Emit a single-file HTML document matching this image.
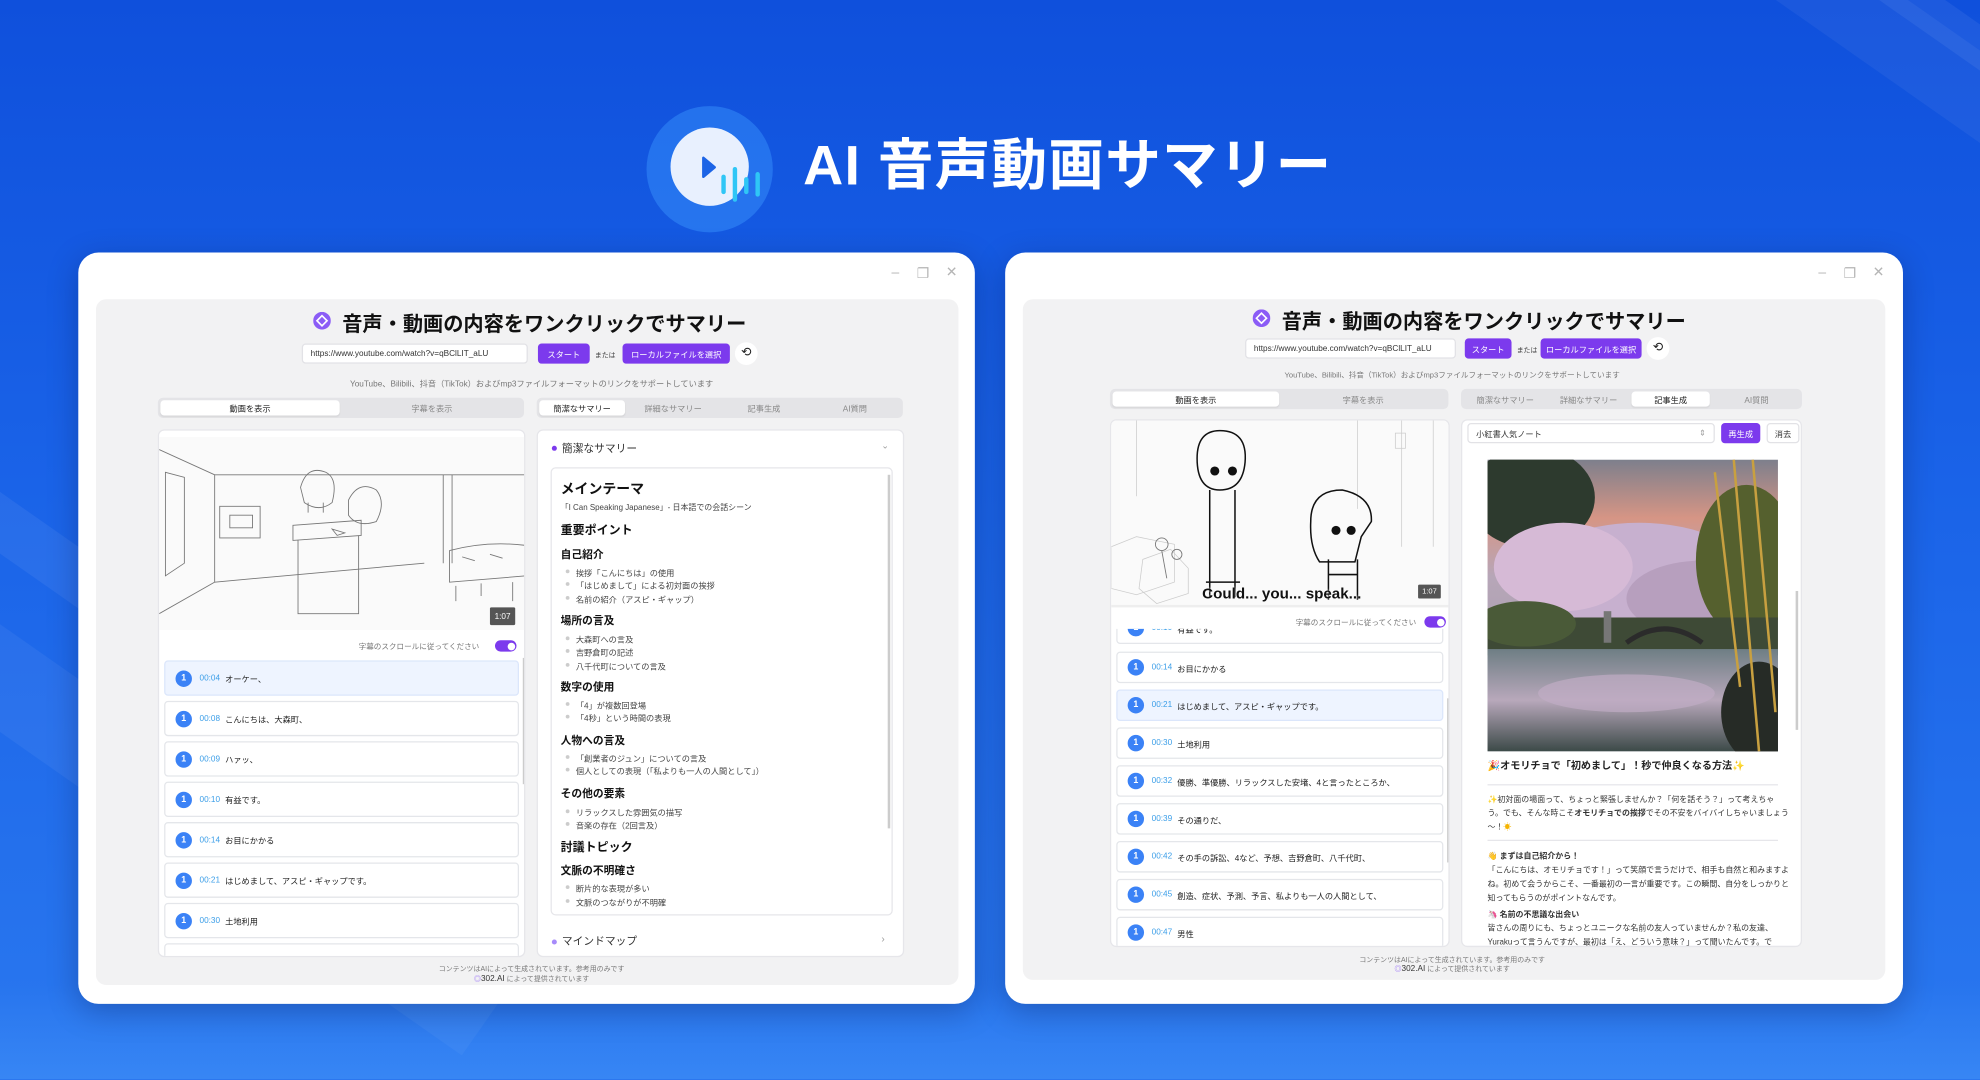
<!DOCTYPE html>
<html><head><meta charset="utf-8">
<style>
*{margin:0;padding:0;box-sizing:border-box}
html,body{width:1980px;height:1080px;overflow:hidden}
body{background:#1b5fe4;font-family:"Liberation Sans","Noto Sans CJK JP",sans-serif}
#w{position:absolute;left:0;top:0;width:1568px;height:855px;transform:scale(1.26276);transform-origin:0 0;overflow:hidden;
background:linear-gradient(180deg,#0f50dc 0%,#1a63e8 45%,#2a78ef 100%)}
.a{position:absolute}
.streak{position:absolute;background:rgba(255,255,255,0.06);transform:rotate(35deg)}
.win{position:absolute;background:#fff;border-radius:16px;box-shadow:0 6px 24px rgba(0,0,40,.25)}
.ctl{position:absolute;color:#b5b5b5;font-size:11px}
.inner{position:absolute;background:#f2f2f3;border-radius:8px}
.ttl{position:absolute;font-weight:bold;font-size:16px;color:#111;white-space:nowrap}
.input{position:absolute;background:#fff;border:1px solid #e2e2e6;border-radius:3px;font-size:6.5px;color:#333;padding-left:6px;display:flex;align-items:center}
.btn{position:absolute;background:#7c3aed;color:#fff;font-size:6.5px;border-radius:3px;display:flex;align-items:center;justify-content:center}
.sm{position:absolute;font-size:6.5px;color:#777;white-space:nowrap}
.tabs{position:absolute;background:#e4e4e7;border-radius:4px}
.tab{position:absolute;top:2px;height:12px;font-size:6.5px;color:#888;display:flex;align-items:center;justify-content:center}
.tab.on{background:#fff;color:#222;border-radius:3px;box-shadow:0 1px 1px rgba(0,0,0,.06)}
.card{position:absolute;background:#fff;border:1px solid #e6e6ea;border-radius:5px;overflow:hidden}
.li{position:absolute;left:4px;background:#fff;border:1px solid #e4e6ea;border-radius:3px;font-size:6.5px;color:#222;display:flex;align-items:center;white-space:nowrap}
.li.hl{background:#eef4ff;border-color:#dbe6fb}
.n{width:13px;height:13px;border-radius:50%;background:#3b82f6;color:#fff;font-size:7px;font-weight:bold;display:flex;align-items:center;justify-content:center;margin:0 6px 0 8px}
.tm{color:#3b9ee8;margin-right:4px}
.tog{position:absolute;width:17px;height:9px;border-radius:5px;background:#7c3aed}
.tog:after{content:"";position:absolute;right:1.5px;top:1.5px;width:6px;height:6px;border-radius:50%;background:#fff}
.bd{position:absolute;background:#555;color:#fff;font-size:6.5px;border-radius:1px;display:flex;align-items:center;justify-content:center}
.h1{position:absolute;font-weight:bold;font-size:11px;color:#111;white-space:nowrap}
.h2{position:absolute;font-weight:bold;font-size:9.5px;color:#111;white-space:nowrap}
.h3{position:absolute;font-weight:bold;font-size:8.5px;color:#111;white-space:nowrap}
.bl{position:absolute;font-size:6.5px;color:#444;white-space:nowrap}
.bl:before{content:"";position:absolute;left:-8px;top:3px;width:3px;height:3px;border-radius:50%;background:#ccc}
.p{position:absolute;font-size:6.3px;color:#333;white-space:nowrap}
.foot{position:absolute;font-size:5.5px;color:#777;white-space:nowrap;text-align:center}
</style></head><body>
<div id="w">
<div class="streak" style="left:-120px;top:520px;width:600px;height:40px"></div>
<div class="streak" style="left:-160px;top:600px;width:600px;height:70px;background:rgba(255,255,255,.05)"></div>
<div class="streak" style="left:1200px;top:-60px;width:500px;height:30px"></div>
<div class="streak" style="left:1280px;top:20px;width:500px;height:60px;background:rgba(255,255,255,.05)"></div>
<div class="a" style="left:0;top:780px;width:1568px;height:75px;background:linear-gradient(180deg,rgba(80,150,255,0),rgba(80,160,255,.35))"></div>

<div class="a" style="left:512px;top:84px;width:100px;height:100px;border-radius:50%;background:rgba(60,150,255,.45)"></div>
<div class="a" style="left:531px;top:101px;width:62px;height:62px;border-radius:50%;background:#e8f0fe"></div>
<svg class="a" style="left:520px;top:90px" width="100" height="90">
<path d="M37 35 L37 50 L46 42.5 Z" fill="#1c64e6" stroke="#1c64e6" stroke-width="2" stroke-linejoin="round"/>
<g stroke="#2fc6f6" stroke-width="3.5" stroke-linecap="round"><line x1="53" y1="50" x2="53" y2="62"/><line x1="62" y1="44" x2="62" y2="68"/><line x1="71" y1="52" x2="71" y2="62"/><line x1="80" y1="48" x2="80" y2="64"/></g>
</svg>
<div class="a" style="left:636px;top:104px;font-size:44px;font-weight:bold;color:#fff;white-space:nowrap;letter-spacing:1px;line-height:55px">AI 音声動画サマリー</div>

<!-- LEFT WINDOW -->
<div class="win" style="left:62px;top:200px;width:710px;height:595px">
<div class="ctl" style="left:644px;top:10px">–</div>
<div class="ctl" style="left:664px;top:10px">❐</div>
<div class="ctl" style="left:687px;top:9px">✕</div>
<div class="inner" style="left:14px;top:37px;width:683px;height:543px">
<svg class="a" style="left:172px;top:10px" width="14" height="14"><circle cx="7" cy="7" r="7" fill="#8b5cf6"/><path d="M7 3 L11 7 L7 11 L3 7Z" fill="none" stroke="#fff" stroke-width="1.3"/></svg>
<div class="ttl" style="left:195px;top:6px">音声・動画の内容をワンクリックでサマリー</div>
<div class="input" style="left:163px;top:35px;width:179px;height:16px">https://www.youtube.com/watch?v=qBClLIT_aLU</div>
<div class="btn" style="left:350px;top:35px;width:41px;height:16px">スタート</div>
<div class="sm" style="left:395px;top:40px;color:#444;font-size:5.5px">または</div>
<div class="btn" style="left:417px;top:35px;width:85px;height:16px">ローカルファイルを選択</div>
<div class="a" style="left:506px;top:34px;width:18px;height:18px;border-radius:50%;background:#fff;font-size:10px;text-align:center;line-height:18px;color:#222">⟲</div>
<div class="sm" style="left:0;width:690px;text-align:center;top:61px">YouTube、Bilibili、抖音（TikTok）およびmp3ファイルフォーマットのリンクをサポートしています</div>
<div class="tabs" style="left:49px;top:78px;width:290px;height:16px">
<div class="tab on" style="left:2px;width:142px">動画を表示</div><div class="tab" style="left:146px;width:142px">字幕を表示</div></div>
<div class="tabs" style="left:349px;top:78px;width:290px;height:16px">
<div class="tab on" style="left:2px;width:68px">簡潔なサマリー</div><div class="tab" style="left:72px;width:72px">詳細なサマリー</div><div class="tab" style="left:144px;width:72px">記事生成</div><div class="tab" style="left:216px;width:72px">AI質問</div></div>

<div class="card" style="left:49px;top:103px;width:291px;height:418px">
<svg class="a" style="left:0;top:5px" width="291" height="153" stroke="#777" fill="none" stroke-width=".7">
<rect width="291" height="153" fill="#fafafa" stroke="none"/>
<path d="M0 10 L44 30 L44 115 L0 140"/><path d="M44 30 L291 30"/><path d="M44 115 L210 100"/>
<path d="M5 28 L20 32 L20 100 L5 110Z"/><path d="M48 55 L80 55 L80 80 L48 80Z"/><path d="M56 62h18v10h-18z"/>
<line x1="225" y1="30" x2="225" y2="100"/><line x1="232" y1="30" x2="232" y2="100"/>
<path d="M106 70 L160 66 L160 78 L106 82Z"/><path d="M110 82 L110 140 L158 140 L158 78"/>
<path d="M112 40 q5 -18 20 -12 q10 5 5 24 q-10 8 -22 0z"/><path d="M150 50 q8 -16 22 -8 q8 10 0 25 q-15 5 -22 -5z"/>
<path d="M118 52 l0 8 M130 52 l0 8"/><path d="M137 73 l10 3 l-6 2z"/>
<path d="M230 90 q30 -8 61 -4 L291 110 L230 115Z"/><path d="M235 118 l0 12 M280 115 l0 15 M255 116 l0 10"/>
<path d="M240 95 l10 3 M262 93 l10 3"/>
</svg>
<div class="bd" style="left:262px;top:140px;width:20px;height:14px">1:07</div>
<div class="sm" style="left:158px;top:166px;font-size:6px">字幕のスクロールに従ってください</div>
<div class="tog" style="left:266px;top:166px"></div>
<div class="li hl" style="top:182px;width:281px;height:28px"><span class="n">1</span><span class="tm">00:04</span>オーケー、</div>
<div class="li" style="top:214px;width:281px;height:28px"><span class="n">1</span><span class="tm">00:08</span>こんにちは、大森町、</div>
<div class="li" style="top:246px;width:281px;height:28px"><span class="n">1</span><span class="tm">00:09</span>ハァッ、</div>
<div class="li" style="top:278px;width:281px;height:28px"><span class="n">1</span><span class="tm">00:10</span>有益です。</div>
<div class="li" style="top:310px;width:281px;height:28px"><span class="n">1</span><span class="tm">00:14</span>お目にかかる</div>
<div class="li" style="top:342px;width:281px;height:28px"><span class="n">1</span><span class="tm">00:21</span>はじめまして、アスピ・ギャップです。</div>
<div class="li" style="top:374px;width:281px;height:28px"><span class="n">1</span><span class="tm">00:30</span>土地利用</div>
<div class="li" style="top:406px;width:281px;height:28px"></div>
<div class="a" style="left:288px;top:180px;width:1.5px;height:100px;background:#ccc"></div>
</div>

<div class="card" style="left:349px;top:103px;width:291px;height:418px">
<div class="a" style="left:11px;top:12px;width:4px;height:4px;border-radius:50%;background:#7c3aed"></div>
<div class="a" style="left:19px;top:8px;font-size:8.5px;color:#333">簡潔なサマリー</div>
<div class="a" style="left:272px;top:8px;font-size:7px;color:#999">⌄</div>
<div class="a" style="left:10px;top:29px;width:271px;height:355px;border:1px solid #e6e6ea;border-radius:4px"></div>
<div class="a" style="left:277px;top:35px;width:1.5px;height:280px;background:#ccc"></div>
<div class="h1" style="left:18px;top:38px">メインテーマ</div>
<div class="p" style="left:18px;top:56px;color:#444">「I Can Speaking Japanese」- 日本語での会話シーン</div>
<div class="h2" style="left:18px;top:71px">重要ポイント</div>
<div class="h3" style="left:18px;top:92px">自己紹介</div>
<div class="bl" style="left:30px;top:107px">挨拶「こんにちは」の使用</div>
<div class="bl" style="left:30px;top:117px">「はじめまして」による初対面の挨拶</div>
<div class="bl" style="left:30px;top:128px">名前の紹介（アスピ・ギャップ）</div>
<div class="h3" style="left:18px;top:144px">場所の言及</div>
<div class="bl" style="left:30px;top:160px">大森町への言及</div>
<div class="bl" style="left:30px;top:170px">吉野倉町の記述</div>
<div class="bl" style="left:30px;top:181px">八千代町についての言及</div>
<div class="h3" style="left:18px;top:197px">数字の使用</div>
<div class="bl" style="left:30px;top:212px">「4」が複数回登場</div>
<div class="bl" style="left:30px;top:222px">「4秒」という時間の表現</div>
<div class="h3" style="left:18px;top:239px">人物への言及</div>
<div class="bl" style="left:30px;top:254px">「創業者のジュン」についての言及</div>
<div class="bl" style="left:30px;top:264px">個人としての表現（「私よりも一人の人間として」）</div>
<div class="h3" style="left:18px;top:281px">その他の要素</div>
<div class="bl" style="left:30px;top:297px">リラックスした雰囲気の描写</div>
<div class="bl" style="left:30px;top:307px">音楽の存在（2回言及）</div>
<div class="h2" style="left:18px;top:322px">討議トピック</div>
<div class="h3" style="left:18px;top:342px">文脈の不明確さ</div>
<div class="bl" style="left:30px;top:357px">断片的な表現が多い</div>
<div class="bl" style="left:30px;top:368px">文脈のつながりが不明確</div>
<div class="a" style="left:11px;top:403px;width:4px;height:4px;border-radius:50%;background:#a78bfa"></div>
<div class="a" style="left:19px;top:398px;font-size:8.5px;color:#333">マインドマップ</div>
<div class="a" style="left:272px;top:398px;font-size:8px;color:#999">›</div>
</div>
<div class="foot" style="left:0;width:690px;top:526px">コンテンツはAIによって生成されています。参考用のみです</div>
<div class="foot" style="left:0;width:690px;top:534px"><span style="color:#8b5cf6">◎</span><span style="color:#333;font-size:6.5px">302.AI</span> によって提供されています</div>
</div>
</div>

<!-- RIGHT WINDOW -->
<div class="win" style="left:796px;top:200px;width:711px;height:595px">
<div class="ctl" style="left:644px;top:10px">–</div>
<div class="ctl" style="left:664px;top:10px">❐</div>
<div class="ctl" style="left:687px;top:9px">✕</div>
<div class="inner" style="left:14px;top:37px;width:683px;height:539px">
<svg class="a" style="left:182px;top:8px" width="14" height="14"><circle cx="7" cy="7" r="7" fill="#8b5cf6"/><path d="M7 3 L11 7 L7 11 L3 7Z" fill="none" stroke="#fff" stroke-width="1.3"/></svg>
<div class="ttl" style="left:205px;top:4px">音声・動画の内容をワンクリックでサマリー</div>
<div class="input" style="left:176px;top:31px;width:167px;height:16px">https://www.youtube.com/watch?v=qBClLIT_aLU</div>
<div class="btn" style="left:350px;top:31px;width:37px;height:16px">スタート</div>
<div class="sm" style="left:391px;top:36px;color:#444;font-size:5.5px">または</div>
<div class="btn" style="left:410px;top:31px;width:80px;height:16px">ローカルファイルを選択</div>
<div class="a" style="left:494px;top:30px;width:18px;height:18px;border-radius:50%;background:#fff;font-size:10px;text-align:center;line-height:18px;color:#222">⟲</div>
<div class="sm" style="left:0;width:680px;text-align:center;top:55px;font-size:6px">YouTube、Bilibili、抖音（TikTok）およびmp3ファイルフォーマットのリンクをサポートしています</div>
<div class="tabs" style="left:69px;top:71px;width:268px;height:16px">
<div class="tab on" style="left:2px;width:132px">動画を表示</div><div class="tab" style="left:135px;width:131px">字幕を表示</div></div>
<div class="tabs" style="left:347px;top:71px;width:270px;height:16px">
<div class="tab" style="left:2px;width:66px">簡潔なサマリー</div><div class="tab" style="left:68px;width:66px">詳細なサマリー</div><div class="tab on" style="left:135px;width:62px">記事生成</div><div class="tab" style="left:200px;width:68px">AI質問</div></div>

<div class="card" style="left:69px;top:95px;width:269px;height:418px">
<svg class="a" style="left:0;top:0" width="269" height="146" fill="none" stroke="#111" stroke-width="1.2">
<rect width="269" height="146" fill="#fafafa" stroke="none"/>
<g stroke="#ccc" stroke-width=".6"><line x1="20" y1="0" x2="20" y2="60"/><line x1="195" y1="0" x2="195" y2="70"/><line x1="230" y1="0" x2="230" y2="100"/><line x1="255" y1="0" x2="255" y2="100"/><rect x="225" y="10" width="8" height="12"/>
<path d="M0 100 l20 -8 l30 6 l0 30 l-30 10 l-20 -5z"/><path d="M25 110 l22 -8 l14 15 l0 20 l-25 8 l-14 -12z"/></g>
<g stroke="#777" stroke-width=".7"><circle cx="40" cy="98" r="5"/><circle cx="52" cy="106" r="4"/><line x1="40" y1="103" x2="44" y2="125"/></g>
<path d="M68 30 q0 -22 18 -22 q22 0 20 25 q-2 22 -20 22 q-18 0 -18 -25z"/>
<circle cx="82" cy="40" r="3" fill="#111"/><circle cx="96" cy="40" r="3" fill="#111"/>
<path d="M78 55 L78 140 M98 55 L98 140 M75 128 h27"/>
<path d="M158 80 q0 -25 25 -25 q24 5 23 25 l-8 12 l-5 20 l-28 0 q-8 -12 -7 -32z"/>
<circle cx="178" cy="87" r="3" fill="#111"/><circle cx="190" cy="87" r="3" fill="#111"/>
<path d="M172 110 L172 142 M195 110 L195 142 M172 122 h23"/>
</svg>
<div class="a" style="left:72px;top:130px;font-size:12px;font-weight:bold;color:#111;white-space:nowrap;text-shadow:0 0 2px #fff">Could... you... speak...</div>
<div class="bd" style="left:243px;top:130px;width:18px;height:11px;font-size:6px">1:07</div>
<div class="a" style="left:0;top:146px;width:269px;height:2px;background:#eee"></div>
<div class="sm" style="left:146px;top:155px;font-size:6px">字幕のスクロールに従ってください</div>
<div class="tog" style="left:248px;top:155px"></div>
<div class="a" style="left:0;top:165px;width:269px;height:253px;overflow:hidden">
<div class="li" style="top:-13px;width:259px;height:25px"><span class="n">1</span><span class="tm">00:10</span>有益です。</div>
<div class="li" style="top:18px;width:259px;height:25px"><span class="n">1</span><span class="tm">00:14</span>お目にかかる</div>
<div class="li hl" style="top:48px;width:259px;height:25px"><span class="n">1</span><span class="tm">00:21</span>はじめまして、アスピ・ギャップです。</div>
<div class="li" style="top:78px;width:259px;height:25px"><span class="n">1</span><span class="tm">00:30</span>土地利用</div>
<div class="li" style="top:108px;width:259px;height:25px"><span class="n">1</span><span class="tm">00:32</span>優勝、準優勝、リラックスした安堵、4と言ったところか、</div>
<div class="li" style="top:138px;width:259px;height:25px"><span class="n">1</span><span class="tm">00:39</span>その通りだ、</div>
<div class="li" style="top:168px;width:259px;height:25px"><span class="n">1</span><span class="tm">00:42</span>その手の訴訟、4など、予想、吉野倉町、八千代町、</div>
<div class="li" style="top:198px;width:259px;height:25px"><span class="n">1</span><span class="tm">00:45</span>創造、症状、予測、予言、私よりも一人の人間として、</div>
<div class="li" style="top:228px;width:259px;height:25px"><span class="n">1</span><span class="tm">00:47</span>男性</div>
</div>
<div class="a" style="left:266px;top:220px;width:1.5px;height:130px;background:#ccc"></div>
</div>

<div class="card" style="left:347px;top:95px;width:270px;height:418px">
<div class="input" style="left:4px;top:2px;width:196px;height:16px">小紅書人気ノート<span style="position:absolute;right:6px;color:#999">⇕</span></div>
<div class="btn" style="left:205px;top:2px;width:31px;height:16px">再生成</div>
<div class="a" style="left:241px;top:2px;width:26px;height:16px;border:1px solid #e2e2e6;border-radius:3px;font-size:6.5px;display:flex;align-items:center;justify-content:center;color:#333">消去</div>
<div class="a" style="left:264px;top:135px;width:1.5px;height:110px;background:#ccc"></div>
<svg class="a" style="left:20px;top:31px" width="230" height="231">
<defs>
<linearGradient id="sky" x1="0" y1="0" x2="0" y2="1"><stop offset="0" stop-color="#7d7f8c"/><stop offset=".2" stop-color="#d69585"/><stop offset=".4" stop-color="#b7a6b8"/><stop offset="1" stop-color="#9a9aa8"/></linearGradient>
<linearGradient id="wat" x1="0" y1="0" x2="0" y2="1"><stop offset="0" stop-color="#6e7e84"/><stop offset=".5" stop-color="#b8a8bb"/><stop offset="1" stop-color="#3c4a48"/></linearGradient>
</defs>
<rect width="230" height="231" fill="url(#sky)"/>
<ellipse cx="35" cy="30" rx="50" ry="40" fill="#2d3a2e"/>
<ellipse cx="120" cy="95" rx="90" ry="45" fill="#c7b0cf"/>
<ellipse cx="60" cy="85" rx="55" ry="35" fill="#d6bad6"/>
<ellipse cx="170" cy="110" rx="60" ry="30" fill="#b79fbe"/>
<ellipse cx="205" cy="80" rx="40" ry="60" fill="#55602e"/>
<rect x="0" y="125" width="230" height="30" fill="#3e4a36"/>
<ellipse cx="30" cy="130" rx="40" ry="18" fill="#4a5a38"/>
<path d="M110 145 q30 -22 60 0" stroke="#2b2b2b" stroke-width="4" fill="none"/>
<rect x="0" y="150" width="230" height="81" fill="url(#wat)"/>
<ellipse cx="110" cy="185" rx="70" ry="15" fill="#c0adc4" opacity=".7"/>
<ellipse cx="215" cy="200" rx="30" ry="40" fill="#262b26"/>
<g stroke="#c8a040" stroke-width="2"><line x1="195" y1="0" x2="215" y2="231"/><line x1="210" y1="0" x2="228" y2="200"/><line x1="180" y1="10" x2="200" y2="180"/></g>
<rect x="92" y="120" width="6" height="25" fill="#777"/>
</svg>
<div class="a" style="left:20px;top:268px;font-size:8px;font-weight:bold;color:#222;white-space:nowrap">🎉オモリチョで「初めまして」！秒で仲良くなる方法<span style="color:#f5b400">✨</span></div>
<div class="a" style="left:20px;top:288px;width:230px;height:1px;background:#e6e6ea"></div>
<div class="p" style="left:20px;top:295px"><span style="color:#f5b400">✨</span>初対面の場面って、ちょっと緊張しませんか？「何を話そう？」って考えちゃ</div>
<div class="p" style="left:20px;top:306px">う。でも、そんな時こそ<b>オモリチョでの挨拶</b>でその不安をバイバイしちゃいましょう</div>
<div class="p" style="left:20px;top:317px">〜！<span style="color:#f5b400">☀</span></div>
<div class="a" style="left:20px;top:332px;width:230px;height:1px;background:#e6e6ea"></div>
<div class="p" style="left:20px;top:340px;font-weight:bold">👋 まずは自己紹介から！</div>
<div class="p" style="left:20px;top:351px">「こんにちは、オモリチョです！」って笑顔で言うだけで、相手も自然と和みますよ</div>
<div class="p" style="left:20px;top:362px">ね。初めて会うからこそ、一番最初の一言が重要です。この瞬間、自分をしっかりと</div>
<div class="p" style="left:20px;top:373px">知ってもらうのがポイントなんです。</div>
<div class="p" style="left:20px;top:386px;font-weight:bold">🦄 名前の不思議な出会い</div>
<div class="p" style="left:20px;top:397px">皆さんの周りにも、ちょっとユニークな名前の友人っていませんか？私の友達、</div>
<div class="p" style="left:20px;top:408px">Yurakuって言うんですが、最初は「え、どういう意味？」って聞いたんです。で</div>
</div>
<div class="foot" style="left:0;width:680px;top:519px">コンテンツはAIによって生成されています。参考用のみです</div>
<div class="foot" style="left:0;width:680px;top:526px"><span style="color:#8b5cf6">◎</span><span style="color:#333;font-size:6.5px">302.AI</span> によって提供されています</div>
</div>
</div>
</div>
</body></html>
